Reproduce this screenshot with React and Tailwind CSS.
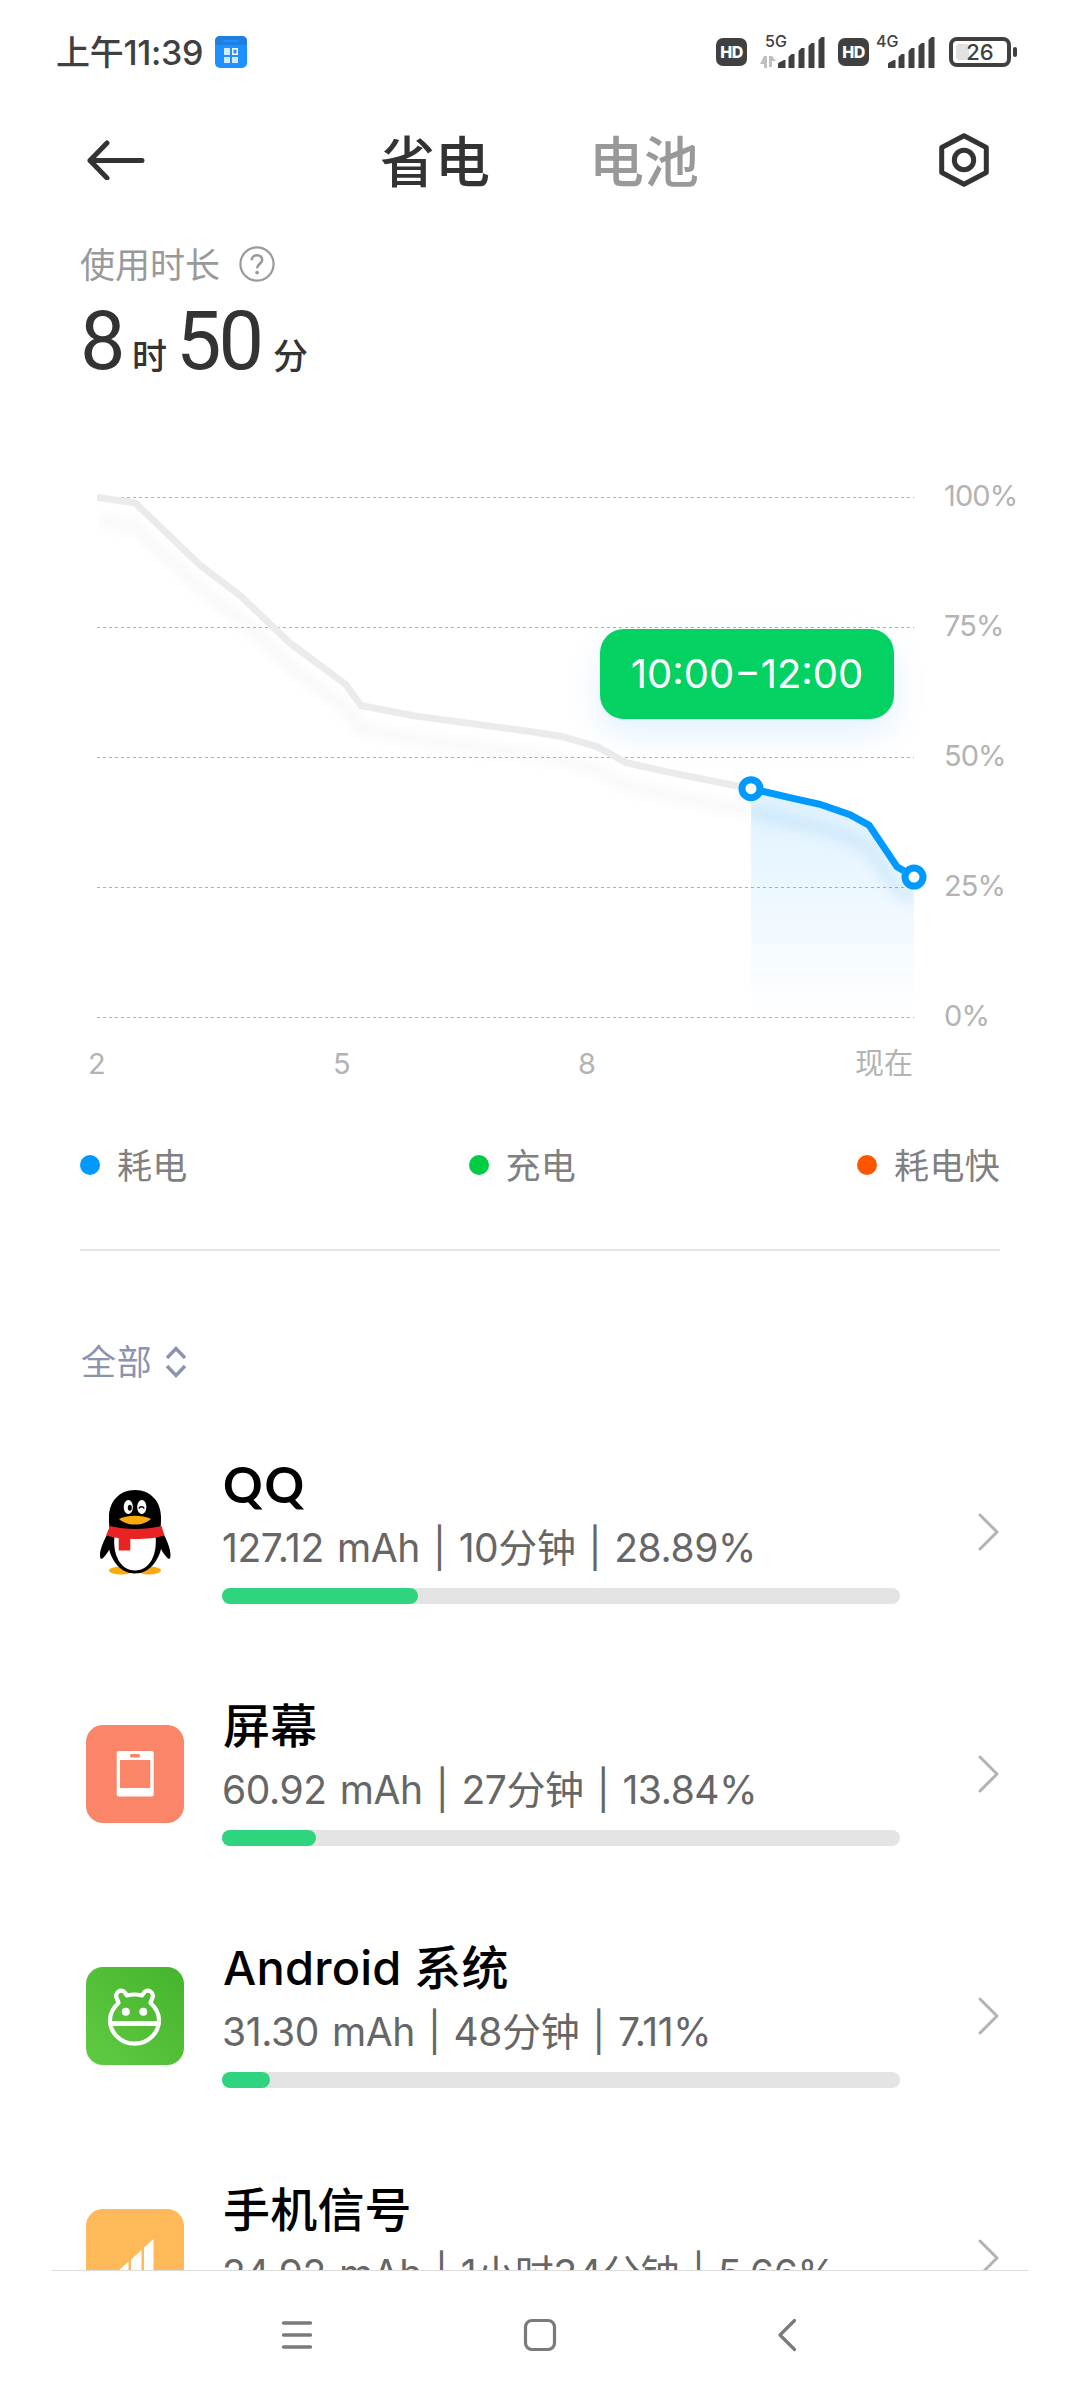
import React, { useState } from 'react';

const levels = [
  { x: 0, pct: 100 },
  { x: 38, pct: 99 },
  { x: 103, pct: 87 },
  { x: 144, pct: 81 },
  { x: 193, pct: 72 },
  { x: 249, pct: 64 },
  { x: 264, pct: 60 },
  { x: 317, pct: 58 },
  { x: 433, pct: 55 },
  { x: 466, pct: 54 },
  { x: 501, pct: 52 },
  { x: 529, pct: 49 },
  { x: 581, pct: 46.8 },
  { x: 654, pct: 44 },
];

const selected = [
  { x: 654, pct: 44 },
  { x: 695, pct: 42.2 },
  { x: 723, pct: 41 },
  { x: 753, pct: 39 },
  { x: 772, pct: 37 },
  { x: 800, pct: 29 },
  { x: 817, pct: 27 },
];

const legend = [
  { label: '耗电', dot: 'bg-[#0099ff]' },
  { label: '充电', dot: 'bg-[#00cc44]' },
  { label: '耗电快', dot: 'bg-[#ff5500]' },
];

const apps = [
  { id: 'qq', name: 'QQ', usage: '127.12 mAh | 10分钟 | 28.89%', percent: 28.89 },
  { id: 'screen', name: '屏幕', usage: '60.92 mAh | 27分钟 | 13.84%', percent: 13.84 },
  { id: 'android', name: 'Android 系统', usage: '31.30 mAh | 48分钟 | 7.11%', percent: 7.11 },
  { id: 'signal', name: '手机信号', usage: '24.92 mAh | 1小时34分钟 | 5.66%', percent: 5.66 },
];

// 100% sits at y=10, 0% at y=530
const toY = (pct) => 10.5 + (100 - pct) * 5.2;
const toPath = (points) => points.map((p, i) => `${i ? 'L' : 'M'}${p.x} ${toY(p.pct)}`).join(' ');

function HdBadge() {
  return (
    <div className="w-[31px] h-7 rounded-[7px] bg-[#404040] text-white text-[16px] leading-7 font-extrabold text-center tracking-[-0.5px]">
      HD
    </div>
  );
}

function Signal() {
  return (
    <svg width="48" height="31" viewBox="0 0 48 31" fill="#404040">
      <path d="M0 31v-4q0-1 1-1.500L6 23h1.500v8z" />
      <path d="M10.500 31V20l3-3h3v14z" />
      <path d="M20.500 31V14l3-3h3v20z" />
      <path d="M30.500 31V9l3-3h3v25z" />
      <path d="M40.500 31V3l3-3h3v31z" />
    </svg>
  );
}

function StatusBar() {
  return (
    <div className="h-[104px] pl-14 pr-[63px] flex items-center justify-between text-[#404040]">
      <div className="flex items-center">
        <span className="w-[159px] pt-px text-[34px] leading-[42px] font-medium tracking-[-0.3px] whitespace-nowrap">上午11:39</span>
        <svg width="32" height="32" viewBox="0 0 32 32">
          <rect width="32" height="32" rx="5" fill="#1e90ff" />
          <path d="M0 9V5a5 5 0 0 1 5-5h22a5 5 0 0 1 5 5v4z" fill="#1f7fe0" />
          <rect x="8" y="4" width="16" height="2" rx="1" fill="#1e90ff" />
          <g fill="#d2e9ff">
            <rect x="9" y="12" width="6" height="7" />
            <rect x="9" y="21" width="6" height="6" />
            <rect x="17" y="21" width="6" height="6" />
          </g>
          <rect x="17.75" y="12.75" width="4.5" height="5.5" fill="#1e90ff" stroke="#fff" strokeWidth="1.5" />
        </svg>
      </div>
      <div className="flex items-center">
        <HdBadge />
        <div className="relative ml-[31px]">
          <Signal />
          <span className="absolute -left-[13px] -top-[4px] text-[16px] leading-4 font-medium">5G</span>
          <svg className="absolute -left-[18px] bottom-0" width="16" height="12" viewBox="0 0 16 12" fill="#bfbfbf">
            <path d="M4 0h3v12H4V8H0z" />
            <path d="M9 0h3l4 5h-4v6H9z" />
          </svg>
        </div>
        <div className="ml-3">
          <HdBadge />
        </div>
        <div className="relative ml-[19px]">
          <Signal />
          <span className="absolute -left-[12px] -top-[4px] text-[16px] leading-4 font-medium">4G</span>
        </div>
        <div className="ml-[13px] flex items-center">
          <div className="relative w-[62px] h-[30px] rounded-[8px] border-4 border-[#404040]">
            <div className="absolute left-[3px] top-[3px] w-[13px] h-4 rounded-[3px] bg-[#e2e2e2]" />
            <div className="relative text-center text-[22px] leading-[23px] font-medium">26</div>
          </div>
          <div className="ml-[2px] w-1 h-[10px] rounded-full bg-[#404040]" />
        </div>
      </div>
    </div>
  );
}

function Header({ tab, onChange }) {
  return (
    <div className="h-28 pl-[87px] pr-[91px] flex items-center justify-between">
      <button>
        <svg width="58" height="40" viewBox="0 0 58 40" fill="none" stroke="#333" strokeWidth="5" strokeLinecap="round" strokeLinejoin="round">
          <path d="M55 20.5H3M20 3L3 20.5 20 38" />
        </svg>
      </button>
      <div className="mr-[5px] flex gap-[99px] pt-[4px] text-[55px] leading-[64px] font-medium">
        {['省电', '电池'].map((name) => (
          <button
            key={name}
            onClick={() => onChange(name)}
            className={tab === name ? 'text-[#333333]' : 'text-[#999999]'}
          >
            {name}
          </button>
        ))}
      </div>
      <button>
        <svg width="50" height="54" viewBox="0 0 50 54" fill="none" stroke="#333" strokeWidth="5" strokeLinejoin="round">
          <path d="M25 2.7L47.3 14.5v25L25 51.3 2.7 39.5v-25z" />
          <circle cx="25" cy="27" r="9.7" />
        </svg>
      </button>
    </div>
  );
}

function Usage() {
  return (
    <div className="px-20 pt-6 text-[#333333]">
      <div className="h-12 flex items-center text-[#999999]">
        <span className="w-[159px] pt-[2px] text-[35px] leading-[48px]">使用时长</span>
        <svg width="36" height="36" viewBox="0 0 36 36" fill="none" stroke="#999" strokeWidth="2.2">
          <circle cx="18" cy="18" r="16.6" />
          <path d="M12.8 14.2c0-3 2.2-5 5.2-5s5.2 2 5.2 4.8c0 3.8-5.1 4-5.1 8.2" strokeWidth="2.6" />
          <circle cx="18.1" cy="26.6" r="1.9" fill="#999" stroke="none" />
        </svg>
      </div>
      <div className="h-[104px] pt-[2px] flex items-baseline leading-[104px]">
        <span className="w-[52px] font-[Roboto] text-[81px] tracking-[-3px]">8</span>
        <span className="w-[44px] text-[35px] font-medium">时</span>
        <span className="w-[97px] font-[Roboto] text-[81px] tracking-[-3px]">50</span>
        <span className="text-[35px] font-medium">分</span>
      </div>
    </div>
  );
}

function Chart() {
  const line = toPath(levels);
  const blue = toPath(selected);
  return (
    <div className="relative mt-[95px] pl-[97px]">
      <div className="flex gap-[30px]">
        <svg className="overflow-visible" width="817" height="541" viewBox="0 0 817 541" fill="none">
          <defs>
            <linearGradient id="area" x1="0" y1="301" x2="0" y2="530" gradientUnits="userSpaceOnUse">
              <stop offset="0" stopColor="#0099ff" stopOpacity="0.13" />
              <stop offset="0.4" stopColor="#0099ff" stopOpacity="0.08" />
              <stop offset="1" stopColor="#0099ff" stopOpacity="0" />
            </linearGradient>
            <filter id="soft" x="-10%" y="-20%" width="120%" height="150%">
              <feGaussianBlur stdDeviation="6" />
            </filter>
            <clipPath id="plot">
              <rect x="0" y="0" width="817" height="541" />
            </clipPath>
            <clipPath id="range">
              <rect x="654" y="0" width="163" height="541" />
            </clipPath>
          </defs>
          {[100, 75, 50, 25, 0].map((pct) => (
            <path key={pct} d={`M0 ${toY(pct)}H817`} stroke="#b0b0b0" strokeWidth="1" strokeDasharray="3 3" />
          ))}
          <g clipPath="url(#plot)">
            <path d={line} transform="translate(0 23)" stroke="#000" strokeOpacity="0.024" strokeWidth="14" filter="url(#soft)" />
            <path d={line} stroke="#ebebeb" strokeWidth="7" />
          </g>
          <path d={`${blue} V530 H654 Z`} fill="url(#area)" />
          <g clipPath="url(#range)">
            <path d={blue} transform="translate(0 23)" stroke="#0088cc" strokeOpacity="0.09" strokeWidth="14" filter="url(#soft)" />
          </g>
          <path d={blue} stroke="#0099ff" strokeWidth="7" />
          <circle cx="654" cy={toY(44)} r="9" fill="#fff" stroke="#0099ff" strokeWidth="7" />
          <circle cx="817" cy={toY(27)} r="9" fill="#fff" stroke="#0099ff" strokeWidth="7" />
        </svg>
        <div className="-mt-[11px] h-[560px] flex flex-col justify-between text-[29px] leading-10 tracking-[-0.9px] text-[#b3b3b3]">
          <span>100%</span>
          <span>75%</span>
          <span>50%</span>
          <span>25%</span>
          <span>0%</span>
        </div>
      </div>
      <div className="mt-2 w-[817px] -ml-[9px] flex text-[29px] leading-10 text-[#b3b3b3]">
        <span className="w-[245px]">2</span>
        <span className="w-[245px]">5</span>
        <span>8</span>
        <span className="ml-auto -mr-2">现在</span>
      </div>
      <div className="absolute left-[600px] top-[142px] w-[294px] h-[90px] rounded-3xl bg-[#03d162] text-white text-[40px] leading-[90px] text-center whitespace-nowrap shadow-[0_14px_34px_rgba(0,140,255,0.12)]">
        10:00−12:00
      </div>
    </div>
  );
}

function AppIcon({ id }) {
  if (id === 'qq') {
    return (
      <svg width="98" height="98" viewBox="0 0 98 98">
        <ellipse cx="35" cy="87.5" rx="12" ry="4" fill="#faab0c" />
        <ellipse cx="63" cy="87.5" rx="12" ry="4" fill="#faab0c" />
        <path d="M22 50c-4 7-8 16-8 22 0 5 2 4.500 4 2 3-3 5-7 7-11zM77 50c4 7 7.500 16 7.500 22 0 5-2 4.500-4 2-3-3-5-7-7-11z" />
        <path d="M49 7c-16 0-26 12-26 27 0 4 0 8 .5 11-2 6-2.500 12-1 19 3 14 12 26.500 26.500 26.500S72.500 78 75.500 64c1.500-7 1-13-1-19 .5-3 .5-7 .5-11C75 19 65 7 49 7z" />
        <path d="M28.500 53h41c2 17-5 34.500-20.500 34.500S26.500 70 28.500 53z" fill="#fff" />
        <path d="M24 43c16 4 35 4 51.500 0l3 9.500C71 55 60 56 49 56c-11 0-21-1-29-3.500z" fill="#e92323" />
        <path d="M32.700 52h11.600v15.500H32.700z" fill="#e92323" />
        <ellipse cx="42.300" cy="24" rx="4.600" ry="7" fill="#fff" />
        <ellipse cx="55.800" cy="24" rx="4.600" ry="7" fill="#fff" />
        <ellipse cx="43.800" cy="24.800" rx="2" ry="3" />
        <path d="M53 25.500c1-2.200 4-2.200 5.200 0" fill="none" stroke="#000" strokeWidth="1.500" />
        <path d="M33 36c5-2 10-3.200 16-3.200s11 1.200 16 3.200c-4 3.500-9 5.500-16 5.500S37 39.500 33 36z" fill="#faab0c" />
      </svg>
    );
  }
  if (id === 'screen') {
    return (
      <svg width="98" height="98" viewBox="0 0 98 98">
        <rect width="98" height="98" rx="17" fill="#fb8569" />
        <rect x="30.700" y="26" width="37" height="45.500" rx="2" fill="#fff" />
        <rect x="34" y="35" width="30.300" height="28" fill="#fb8569" />
        <rect x="44" y="29" width="10" height="3.600" rx="1.500" fill="#fb8569" />
      </svg>
    );
  }
  if (id === 'android') {
    return (
      <svg width="98" height="98" viewBox="0 0 98 98">
        <defs>
          <linearGradient id="droid" x1="0" y1="1" x2="1" y2="0">
            <stop offset="0" stopColor="#60ca42" />
            <stop offset="1" stopColor="#46b42d" />
          </linearGradient>
        </defs>
        <rect width="98" height="98" rx="17" fill="url(#droid)" />
        <g fill="none" stroke="#fff" strokeWidth="4.200" strokeLinejoin="round">
          <path d="M41 28.500Q48.500 26.500 56 28.500L58.500 25a5 5 0 0 1 8 5.500L64.500 36C70 41 73 47 73 53 73 66 62 76.700 48.500 76.700S24 66 24 53C24 47 27 41 32.500 36L30.500 30.500a5 5 0 0 1 8-5.500z" />
          <path d="M24 56.500h49" strokeWidth="4.800" />
        </g>
        <circle cx="39.800" cy="44.700" r="4" fill="#fff" />
        <circle cx="57.300" cy="44.700" r="4" fill="#fff" />
      </svg>
    );
  }
  return (
    <svg width="98" height="98" viewBox="0 0 98 98">
      <rect width="98" height="98" rx="17" fill="#ffb958" />
      <g fill="#fff">
        <path d="M31 72v-9l11.500-10.500V72z" />
        <path d="M45 72V50.500L55.500 41v31z" />
        <path d="M58 72V38.500l9.500-8.500v42z" />
      </g>
    </svg>
  );
}

function AppRow({ app }) {
  return (
    <div className="h-[242px] pl-[86px] pr-20 flex items-center">
      <AppIcon id={app.id} />
      <div className="ml-[38px] w-[678px] pb-[9px]">
        <div
          className={`pl-px leading-[66px] text-black whitespace-nowrap ${
            app.id === 'qq' ? 'font-[Lato] font-bold text-[49px] tracking-[2px]' : 'font-medium text-[47px] tracking-[0.2px]'
          }`}
        >
          {app.name}
        </div>
        <div className="text-[39px] leading-[62px] tracking-[-0.4px] [word-spacing:2.5px] text-[#666666] whitespace-nowrap">
          {app.usage}
        </div>
        <div className="mt-[9px] h-4 rounded-full bg-[#e4e4e4]">
          <div className="h-4 rounded-full bg-[#2fd57e]" style={{ width: `${app.percent}%` }} />
        </div>
      </div>
      <svg className="ml-auto" width="22" height="38" viewBox="0 0 22 38" fill="none" stroke="#b3b3b3" strokeWidth="3" strokeLinecap="round" strokeLinejoin="round">
        <path d="M2 2L19 19 2 36" />
      </svg>
    </div>
  );
}

function NavBar() {
  return (
    <div className="absolute inset-x-0 bottom-0 h-[130px] bg-white">
      <div className="mx-[52px] h-px bg-[#dedede]" />
      <div className="h-[128px] pl-[281px] flex items-center">
        <svg width="32" height="32" viewBox="0 0 32 32" stroke="#7a7a7a" strokeWidth="3.400" strokeLinecap="round">
          <path d="M2.500 4h27M2.500 16h27M2.500 28h27" />
        </svg>
        <svg className="ml-[210px]" width="34" height="34" viewBox="0 0 34 34" fill="none" stroke="#7a7a7a" strokeWidth="3.200">
          <rect x="2.500" y="2.500" width="29" height="29" rx="6.500" />
        </svg>
        <svg className="ml-[220px]" width="20" height="34" viewBox="0 0 20 34" fill="none" stroke="#7a7a7a" strokeWidth="3.200" strokeLinecap="round" strokeLinejoin="round">
          <path d="M17.500 2.500L3 17l14.500 14.500" />
        </svg>
      </div>
    </div>
  );
}

export default function App() {
  const [tab, setTab] = useState('省电');

  return (
    <div className="relative w-[1080px] h-[2400px] overflow-hidden bg-white font-['Inter','Noto_Sans_CJK_SC',sans-serif]">
      <StatusBar />
      <Header tab={tab} onChange={setTab} />
      <Usage />
      <Chart />

      <div className="mx-20 mt-[41px] h-20 flex items-center justify-between text-[35px] leading-[48px] tracking-[0.3px] text-[#808080]">
        {legend.map((item) => (
          <div key={item.label} className="flex items-center gap-[17px]">
            <span className={`size-5 rounded-full ${item.dot}`} />
            <span className="pt-[2px]">{item.label}</span>
          </div>
        ))}
      </div>
      <div className="mx-20 mt-[44px] h-[2px] bg-[#e6e6e6]" />

      <button className="ml-[81px] mt-[87px] h-12 flex items-center gap-[13px] text-[35px] leading-[48px] tracking-[0.7px] text-[#8c93b0]">
        全部
        <svg width="22" height="32" viewBox="0 0 22 32" fill="none" stroke="#8c93b0" strokeWidth="3.400">
          <path d="M2 12l9-9.500L20 12M2 20l9 9.500L20 20" />
        </svg>
      </button>

      <div className="mt-[25px]">
        {apps.map((app) => (
          <AppRow key={app.id} app={app} />
        ))}
      </div>

      <NavBar />
    </div>
  );
}
